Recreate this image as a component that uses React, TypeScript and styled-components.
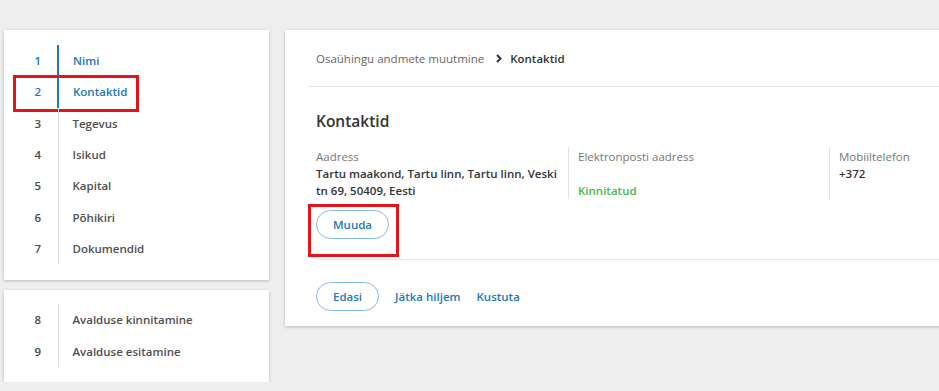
import styled, { createGlobalStyle } from "styled-components";

const GlobalStyle = createGlobalStyle`
  html, body {
    margin: 0;
    padding: 0;
    background: #eeeeee;
    overflow: hidden;
  }
  body {
    font-family: "Open Sans", "Noto Sans", Arial, sans-serif;
    font-size: 11.5px;
    color: #333;
  }
`;

const Page = styled.div`
  display: flex;
  align-items: flex-start;
  gap: 16px;
  padding: 30px 0 0 4px;
  width: calc(100% + 20px);
  box-sizing: border-box;
`;

const Sidebar = styled.div`
  width: 265px;
  flex: none;
  display: flex;
  flex-direction: column;
  gap: 10px;
`;

const Card = styled.div<{ $pad?: string }>`
  background: #fff;
  box-shadow: 0 1px 3px rgba(0, 0, 0, 0.22);
  padding: ${(p) => p.$pad || "0"};
`;

const StepRow = styled.div`
  position: relative;
  display: flex;
  height: 31.3px;
  align-items: stretch;
`;

const StepNum = styled.div<{ $active?: boolean }>`
  width: 53px;
  box-sizing: border-box;
  padding-right: 16px;
  display: flex;
  align-items: center;
  justify-content: flex-end;
  font-weight: 600;
  color: ${(p) => (p.$active ? "#2277bb" : "#4a4a4a")};
`;

const StepLabel = styled.div<{ $active?: boolean }>`
  flex: 1;
  display: flex;
  align-items: center;
  padding-left: 14px;
  border-left: ${(p) => (p.$active ? "2px solid #2277bb" : "1px solid #dedede")};
  margin-left: ${(p) => (p.$active ? "0" : "0.5px")};
  font-weight: 600;
  color: ${(p) => (p.$active ? "#2277bb" : "#4f4f4f")};
`;

const Highlight = styled.div<{ $l: number; $t: number; $w: number; $h: number }>`
  position: absolute;
  left: ${(p) => p.$l}px;
  top: ${(p) => p.$t}px;
  width: ${(p) => p.$w}px;
  height: ${(p) => p.$h}px;
  box-sizing: border-box;
  border: 3px solid #e4141c;
  pointer-events: none;
`;

const Main = styled(Card)`
  flex: 1;
  padding-bottom: 15px;
`;

const Crumbs = styled.div`
  margin-left: 23px;
  padding-left: 8px;
  height: 56px;
  display: flex;
  align-items: center;
  border-bottom: 1px solid #e6e6e6;
  color: #666;

  svg {
    margin: 0 7px 0 11px;
  }
`;

const CrumbCurrent = styled.span`
  color: #333;
  font-weight: 600;
`;

const Section = styled.div`
  margin-left: 31px;
  padding: 22px 0 20px;
  border-bottom: 1px solid #e6e6e6;
`;

const Heading = styled.h2`
  margin: 0;
  font-size: 15.5px;
  line-height: 24px;
  font-weight: 600;
  color: #333;
`;

const Fields = styled.div`
  display: flex;
  margin-top: 14px;
`;

const Field = styled.div<{ $w?: number; $first?: boolean }>`
  width: ${(p) => (p.$w ? `${p.$w}px` : "auto")};
  flex: ${(p) => (p.$w ? "none" : "1")};
  box-sizing: border-box;
  padding: 1px 4px 0 ${(p) => (p.$first ? "0" : "9px")};
  border-left: ${(p) => (p.$first ? "none" : "1px solid #e3e3e3")};
  line-height: 17px;
`;

const Label = styled.div`
  color: #777;
`;

const Value = styled.div<{ $green?: boolean }>`
  font-weight: 600;
  min-height: 17px;
  color: ${(p) => (p.$green ? "#4cb648" : "#333")};
`;

const PillWrap = styled.div`
  position: relative;
  display: inline-block;
  margin-top: 11px;
`;

const Pill = styled.button`
  font-family: inherit;
  font-size: 11.5px;
  font-weight: 600;
  color: #2277bb;
  background: #fff;
  border: 1px solid #7fbde6;
  border-radius: 16px;
  height: 29px;
  padding: 0 16px;
  cursor: pointer;
`;

const Actions = styled.div`
  margin-left: 31px;
  padding-top: 22px;
  display: flex;
  align-items: center;
  gap: 16px;
`;

const LinkBtn = styled.a`
  color: #2277bb;
  font-weight: 600;
  cursor: pointer;
`;

const steps = ["Nimi", "Kontaktid", "Tegevus", "Isikud", "Kapital", "Põhikiri", "Dokumendid"];
const finalSteps = ["Avalduse kinnitamine", "Avalduse esitamine"];

export default function App() {
  return (
    <>
      <GlobalStyle />
      <Page>
        <Sidebar>
          <Card $pad="15px 0 16px">
            {steps.map((s, i) => (
              <StepRow key={s}>
                <StepNum $active={i < 2}>{i + 1}</StepNum>
                <StepLabel $active={i < 2}>{s}</StepLabel>
                {i === 1 && <Highlight $l={9} $t={-1} $w={126} $h={37} />}
              </StepRow>
            ))}
          </Card>
          <Card $pad="14px 0 15px">
            {finalSteps.map((s, i) => (
              <StepRow key={s}>
                <StepNum>{i + 8}</StepNum>
                <StepLabel>{s}</StepLabel>
              </StepRow>
            ))}
          </Card>
        </Sidebar>
        <Main>
          <Crumbs>
            <span>Osaühingu andmete muutmine</span>
            <svg width="8" height="9" viewBox="0 0 8 9">
              <path d="M2 1 L5.5 4.5 L2 8" fill="none" stroke="#333" strokeWidth="2" />
            </svg>
            <CrumbCurrent>Kontaktid</CrumbCurrent>
          </Crumbs>
          <Section>
            <Heading>Kontaktid</Heading>
            <Fields>
              <Field $w={252} $first>
                <Label>Aadress</Label>
                <Value>Tartu maakond, Tartu linn, Tartu linn, Veski tn 69, 50409, Eesti</Value>
              </Field>
              <Field $w={261}>
                <Label>Elektronposti aadress</Label>
                <Value />
                <Value $green>Kinnitatud</Value>
              </Field>
              <Field>
                <Label>Mobiiltelefon</Label>
                <Value>+372</Value>
              </Field>
            </Fields>
            <PillWrap>
              <Pill>Muuda</Pill>
              <Highlight $l={-8} $t={-6} $w={91} $h={53} />
            </PillWrap>
          </Section>
          <Actions>
            <Pill>Edasi</Pill>
            <LinkBtn>Jätka hiljem</LinkBtn>
            <LinkBtn>Kustuta</LinkBtn>
          </Actions>
        </Main>
      </Page>
    </>
  );
}
